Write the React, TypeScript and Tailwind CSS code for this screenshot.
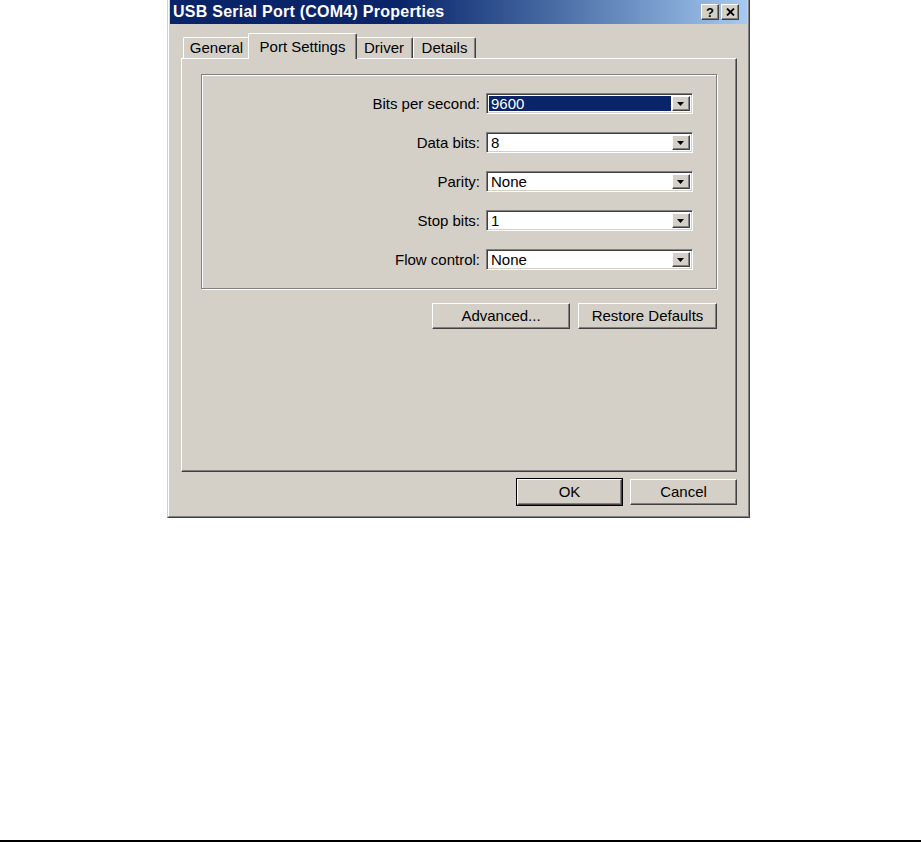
import { useState } from "react";

const raised =
  "border border-t-white border-l-white border-r-[#404040] border-b-[#404040] shadow-[inset_-1px_-1px_0_#808080]";

const rows = [
  { label: "Bits per second:", value: "9600" },
  { label: "Data bits:", value: "8" },
  { label: "Parity:", value: "None" },
  { label: "Stop bits:", value: "1" },
  { label: "Flow control:", value: "None" },
];

const tabs = [
  { name: "General", width: "w-[67px]" },
  { name: "Port Settings", width: "w-[109px]" },
  { name: "Driver", width: "w-[58px]" },
  { name: "Details", width: "w-[63px]" },
];

const Combo = ({ value, selected }: { value: string; selected?: boolean }) => {
  return (
    <div className="flex h-[21px] w-[207px] border border-t-[#808080] border-l-[#808080] border-r-white border-b-white bg-white p-[2px] shadow-[inset_1px_1px_0_#404040,inset_-1px_-1px_0_#d4d0c8]">
      <div
        className={
          selected
            ? "mr-px flex flex-1 items-center bg-[#0a246a] pl-[2px] text-white"
            : "mr-px flex flex-1 items-center pl-[2px] text-black"
        }
      >
        {value}
      </div>
      <div
        className={`flex w-[18px] items-center justify-center bg-[#d4d0c8] ${raised}`}
      >
        <svg width="8" height="4" viewBox="0 0 8 4">
          <path d="M0 0h7l-3.5 4z" fill="#000" />
        </svg>
      </div>
    </div>
  );
};

const Button = ({
  text,
  width,
  isDefault,
}: {
  text: string;
  width: string;
  isDefault?: boolean;
}) => {
  if (isDefault) {
    return (
      <div className={`${width} h-[28px] border border-black`}>
        <button
          className={`flex h-full w-full items-center justify-center bg-[#d4d0c8] ${raised}`}
        >
          {text}
        </button>
      </div>
    );
  }
  return (
    <button
      className={`flex ${width} h-[26px] items-center justify-center bg-[#d4d0c8] ${raised}`}
    >
      {text}
    </button>
  );
};

const App = () => {
  const [activeTab, setActiveTab] = useState("Port Settings");

  return (
    <div
      className="flex h-[842px] w-[921px] flex-col bg-white text-[15px] text-black"
      style={{ fontFamily: '"Liberation Sans", Arial, sans-serif' }}
    >
      <div className="ml-[167px] h-[518px] w-[583px] border-b border-l border-r border-b-[#404040] border-l-[#d4d0c8] border-r-[#404040] bg-[#d4d0c8]">
        <div className="flex h-full flex-col border-b border-l border-r border-b-[#808080] border-l-white border-r-[#808080] px-[1px] pb-[1px]">
          {/* Title bar */}
          <div className="flex h-[24px] items-center justify-between bg-linear-to-r from-[#0a246a] from-40% to-[#a6caf0] pl-[3px] pr-[8px]">
            <span className="text-[16px] font-bold tracking-[0.25px] text-white">
              USB Serial Port (COM4) Properties
            </span>
            <div className="flex gap-[2px]">
              <div
                className={`flex h-[16px] w-[18px] items-center justify-center bg-[#d4d0c8] text-[13px] font-bold leading-none ${raised}`}
              >
                ?
              </div>
              <div
                className={`flex h-[16px] w-[18px] items-center justify-center bg-[#d4d0c8] ${raised}`}
              >
                <svg width="9" height="8" viewBox="0 0 9 8">
                  <path
                    d="M1 0.5L8 7.5M8 0.5L1 7.5"
                    stroke="#000"
                    strokeWidth="1.8"
                  />
                </svg>
              </div>
            </div>
          </div>

          <div className="flex flex-1 flex-col pl-[11px] pr-[10px]">
            {/* Tabs */}
            <div className="mt-[9px] flex h-[25px] items-end pl-[2px]">
              {tabs.map((tab) => {
                const isActive = tab.name === activeTab;
                return (
                  <div
                    key={tab.name}
                    onClick={() => setActiveTab(tab.name)}
                    className={
                      isActive
                        ? `relative z-10 -mx-[2px] -mb-px flex h-[26px] ${tab.width} items-start justify-center rounded-t-[2px] border-l border-r border-t border-l-white border-r-[#404040] border-t-white bg-[#d4d0c8] pt-[2px] shadow-[inset_-1px_0_0_#808080]`
                        : `flex h-[21px] ${tab.width} items-center justify-center rounded-t-[2px] border-l border-r border-t border-l-white border-r-[#404040] border-t-white shadow-[inset_-1px_0_0_#808080]`
                    }
                  >
                    {tab.name}
                  </div>
                );
              })}
            </div>

            {/* Panel */}
            <div
              className={`h-[414px] bg-[#d4d0c8] px-[19px] pt-[15px] ${raised}`}
            >
              <div className="flex h-[215px] flex-col gap-[18px] border border-[#808080] pt-[18px] shadow-[1px_1px_0_#fff,inset_1px_1px_0_#fff]">
                {rows.map((row, index) => (
                  <div
                    className="flex h-[21px] items-center gap-[6px] leading-[21px]"
                    key={index}
                  >
                    <span className="w-[278px] text-right">{row.label}</span>
                    <Combo value={row.value} selected={index === 0} />
                  </div>
                ))}
              </div>

              <div className="mt-[14px] flex justify-end gap-[8px]">
                <Button text="Advanced..." width="w-[138px]" />
                <Button text="Restore Defaults" width="w-[139px]" />
              </div>
            </div>

            <div className="mt-[6px] flex justify-end gap-[7px]">
              <Button text="OK" width="w-[107px]" isDefault />
              <div className="flex items-center">
                <Button text="Cancel" width="w-[107px]" />
              </div>
            </div>
          </div>
        </div>
      </div>

      <div className="flex-1" />
      <div className="h-[2px] bg-black" />
    </div>
  );
};

export default App;
